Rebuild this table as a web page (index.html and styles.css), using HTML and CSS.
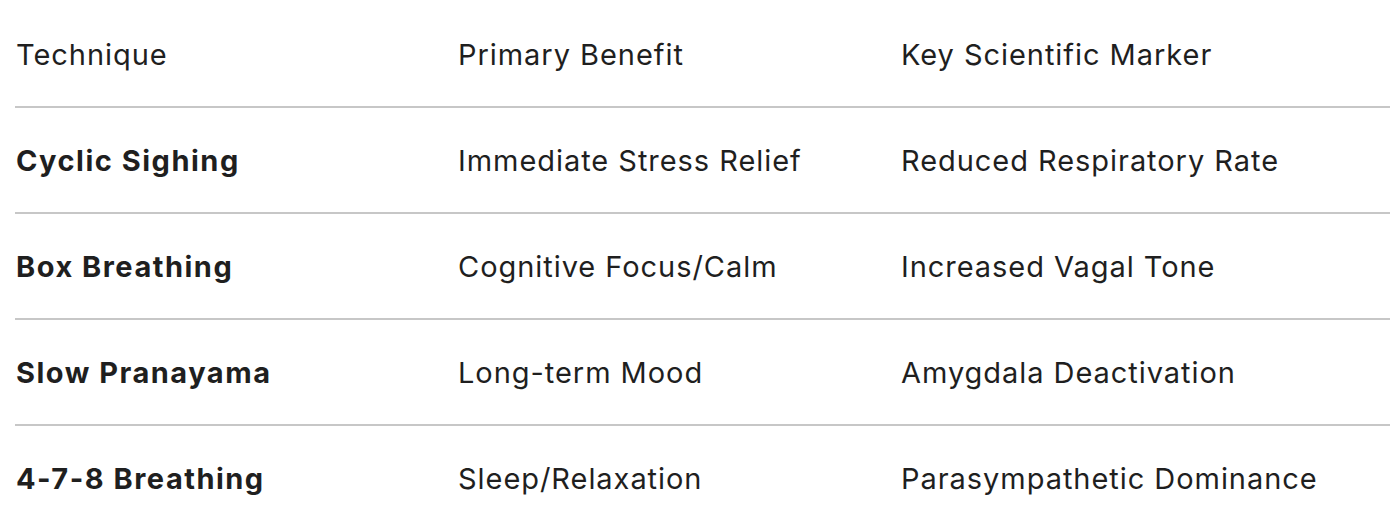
FILE: index.html
```html
<!DOCTYPE html>
<html lang="en">
<head>
<meta charset="utf-8">
<title>Breathing Techniques</title>
<link rel="stylesheet" href="styles.css">
</head>
<body>
<table class="data-table">
  <colgroup>
    <col class="col-a">
    <col class="col-b">
    <col class="col-c">
  </colgroup>
  <thead>
    <tr>
      <th>Technique</th>
      <th>Primary Benefit</th>
      <th>Key Scientific Marker</th>
    </tr>
  </thead>
  <tbody>
    <tr>
      <td class="name">Cyclic Sighing</td>
      <td>Immediate Stress Relief</td>
      <td>Reduced Respiratory Rate</td>
    </tr>
    <tr>
      <td class="name">Box Breathing</td>
      <td>Cognitive Focus/Calm</td>
      <td>Increased Vagal Tone</td>
    </tr>
    <tr>
      <td class="name">Slow Pranayama</td>
      <td>Long-term Mood</td>
      <td>Amygdala Deactivation</td>
    </tr>
    <tr>
      <td class="name">4-7-8 Breathing</td>
      <td>Sleep/Relaxation</td>
      <td>Parasympathetic Dominance</td>
    </tr>
  </tbody>
</table>
</body>
</html>
```

FILE: styles.css
```css
html, body {
  margin: 0;
  padding: 0;
  background: #ffffff;
}

body {
  font-family: Inter, "Noto Sans", sans-serif;
  color: #1f1f1f;
  overflow: hidden;
  padding-top: 2px;
}

.data-table {
  border-collapse: collapse;
  margin-left: 15px;
  width: calc(100% - 15px);
  table-layout: fixed;
}

.col-a { width: 442px; }
.col-b { width: 443px; }

.data-table th,
.data-table td {
  height: 104px;
  padding: 0 0 0 1px;
  text-align: left;
  vertical-align: middle;
  font-size: 29px;
  font-weight: 400;
  letter-spacing: 0.95px;
  white-space: nowrap;
}

.data-table tr {
  border-bottom: 2px solid #c7c7c7;
}

.data-table tbody tr:last-child {
  border-bottom: none;
}

.data-table td.name {
  font-weight: 700;
  letter-spacing: 1.5px;
}
```
